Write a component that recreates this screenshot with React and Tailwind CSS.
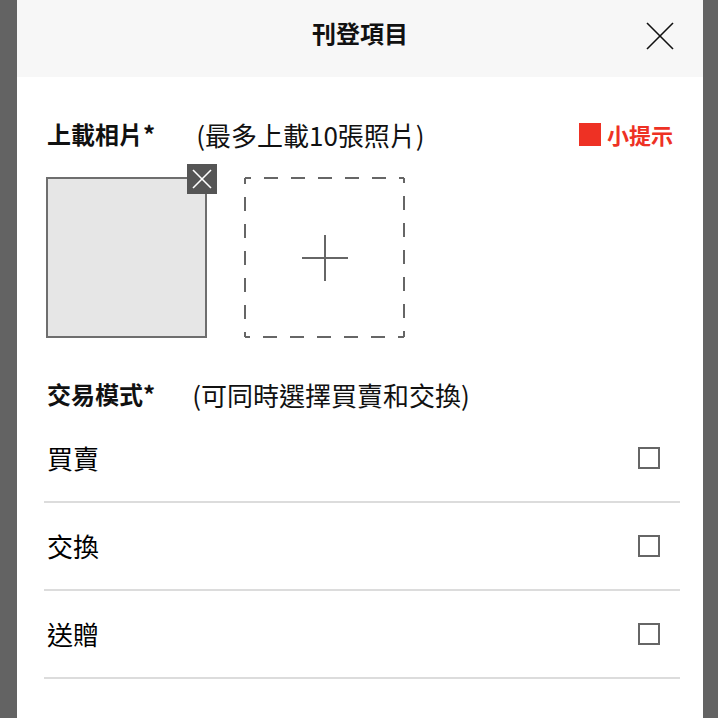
import React from "react";

const font = { fontFamily: '"Noto Sans CJK TC", "Noto Sans", sans-serif' };

function DashedAdd() {
  return (
    <div className="relative w-[161px] h-[161px] flex items-center justify-center">
      <svg className="absolute inset-0" width="161" height="161" viewBox="0 0 161 161">
        <g stroke="#666" strokeWidth="2" strokeDasharray="14 13" strokeDashoffset="8" fill="none">
          <line x1="1" y1="1" x2="160" y2="1" />
          <line x1="1" y1="1" x2="1" y2="160" />
          <line x1="160" y1="160" x2="1" y2="160" />
          <line x1="160" y1="160" x2="160" y2="1" />
        </g>
      </svg>
      <svg width="46" height="46" viewBox="0 0 46 46">
        <line x1="0" y1="23" x2="46" y2="23" stroke="#666" strokeWidth="2" />
        <line x1="23" y1="0" x2="23" y2="46" stroke="#666" strokeWidth="2" />
      </svg>
    </div>
  );
}

function Row({ label }) {
  return (
    <div className="ml-[27px] w-[636px] h-[88px] flex items-center justify-between border-b-2 border-[#dcdcdc] pl-[3px] pr-[20px]">
      <span className="text-[26px] leading-none text-black">{label}</span>
      <span className="w-[22px] h-[22px] border-2 border-[#666] bg-white" />
    </div>
  );
}

export default function App() {
  return (
    <div className="w-[718px] h-[718px] bg-[#636363] flex overflow-hidden" style={font}>
      <div className="ml-[17px] w-[686px] h-full bg-white flex flex-col">
        <div className="h-[77px] bg-[#f7f7f7] grid grid-cols-[1fr_auto_1fr] items-center">
          <div />
          <div className="mb-[11px] text-[24px] font-bold text-[#111]">刊登項目</div>
          <div className="mb-[6px] flex justify-end pr-[29px]">
            <svg width="28" height="28" viewBox="0 0 28 28">
              <line x1="1" y1="1" x2="27" y2="27" stroke="#111" strokeWidth="1.6" />
              <line x1="27" y1="1" x2="1" y2="27" stroke="#111" strokeWidth="1.6" />
            </svg>
          </div>
        </div>

        <div className="mt-[39px] h-[36px] pl-[30px] pr-[30px] flex items-center justify-between">
          <div className="flex items-center">
            <span className="text-[24px] font-bold text-[#111]">上載相片*</span>
            <span className="ml-[41px] text-[26px] text-[#111]">(最多上載10張照片)</span>
          </div>
          <div className="flex items-center gap-[6px]">
            <span className="w-[22px] h-[23px] bg-[#ee3124]" />
            <span className="text-[22px] font-bold text-[#ee3124]">小提示</span>
          </div>
        </div>

        <div className="mt-[25px] pl-[29px] flex items-start gap-[37px]">
          <div className="relative w-[161px] h-[161px] border-2 border-[#6e6e6e] bg-[#e6e6e6]">
            <div className="absolute -top-[15px] -right-[12px] w-[30px] h-[30px] bg-[#555] flex items-center justify-center">
              <svg width="20" height="20" viewBox="0 0 20 20">
                <line x1="1" y1="1" x2="19" y2="19" stroke="#fff" strokeWidth="1.6" />
                <line x1="19" y1="1" x2="1" y2="19" stroke="#fff" strokeWidth="1.6" />
              </svg>
            </div>
          </div>
          <DashedAdd />
        </div>

        <div className="mt-[38px] h-[36px] px-[30px] flex items-center">
          <span className="text-[24px] font-bold text-[#111]">交易模式*</span>
          <span className="ml-[37px] text-[26px] text-[#111]">(可同時選擇買賣和交換)</span>
        </div>

        <div className="mt-[3px]">
          <Row label="買賣" />
          <Row label="交換" />
          <Row label="送贈" />
        </div>
      </div>
    </div>
  );
}
